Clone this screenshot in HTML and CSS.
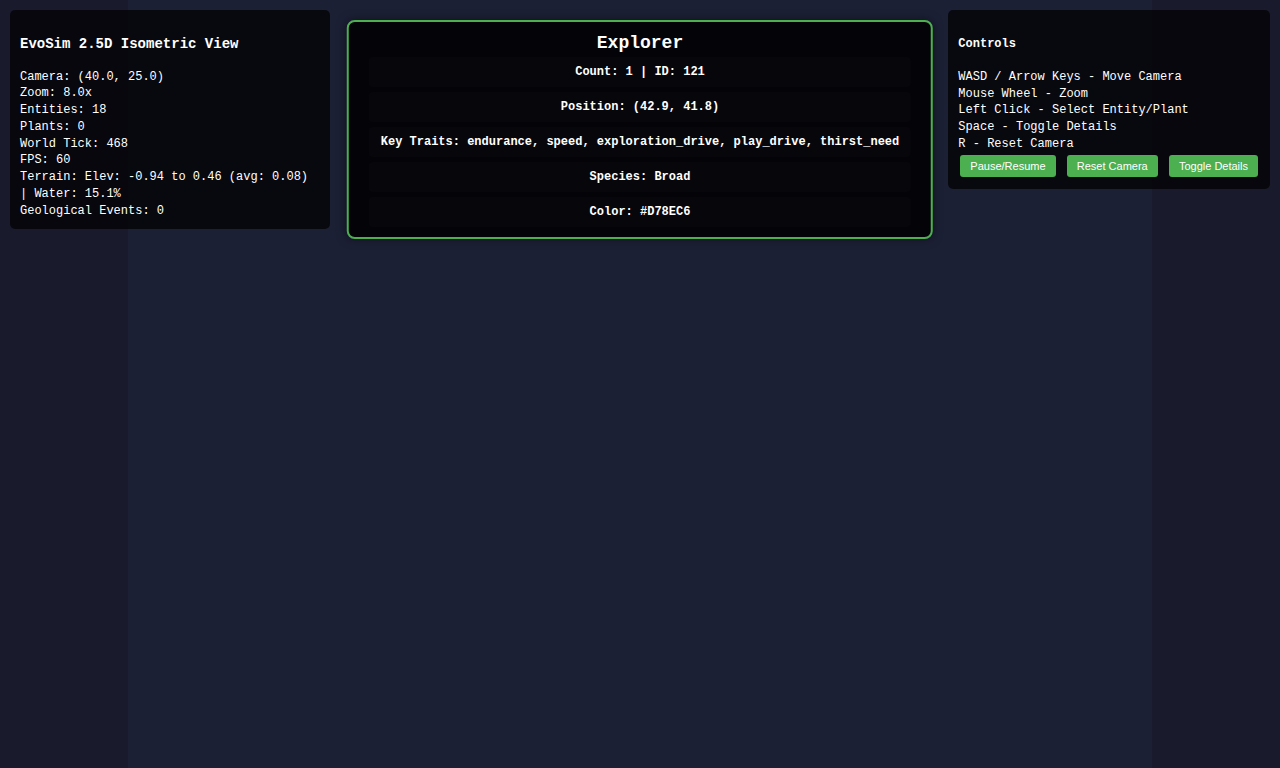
FILE: index.html
```html
<!DOCTYPE html>
<html>
<head>
<meta charset="utf-8">
<title>EvoSim 2.5D</title>
<link rel="stylesheet" href="styles.css">
</head>
<body>
<div class="stage">
  <div class="canvas"></div>
</div>

<div class="panel info">
  <h3 class="title">EvoSim 2.5D Isometric View</h3>
  <div class="lines">
    <div>Camera: (40.0, 25.0)</div>
    <div>Zoom: 8.0x</div>
    <div>Entities: 18</div>
    <div>Plants: 0</div>
    <div>World Tick: 468</div>
    <div>FPS: 60</div>
    <div>Terrain: Elev: -0.94 to 0.46 (avg: 0.08) | Water: 15.1%</div>
    <div>Geological Events: 0</div>
  </div>
</div>

<div class="explorer">
  <div class="explorer-title">Explorer</div>
  <div class="row">Count: 1 | ID: 121</div>
  <div class="row">Position: (42.9, 41.8)</div>
  <div class="row">Key Traits: endurance, speed, exploration_drive, play_drive, thirst_need</div>
  <div class="row">Species: Broad</div>
  <div class="row">Color: #D78EC6</div>
</div>

<div class="panel controls">
  <h4 class="subtitle">Controls</h4>
  <div class="lines">
    <div>WASD / Arrow Keys - Move Camera</div>
    <div>Mouse Wheel - Zoom</div>
    <div>Left Click - Select Entity/Plant</div>
    <div>Space - Toggle Details</div>
    <div>R - Reset Camera</div>
  </div>
  <div class="buttons"><button class="btn">Pause/Resume</button> <button class="btn">Reset Camera</button> <button class="btn">Toggle Details</button></div>
</div>
</body>
</html>
```

FILE: styles.css
```css
html, body {
  margin: 0;
  padding: 0;
  height: 100%;
  overflow: hidden;
}

body {
  background: #1a1a2d;
  font-family: "Liberation Mono", "Courier New", monospace;
  font-size: 12px;
  color: #ffffff;
}

.stage {
  display: flex;
  justify-content: center;
  height: 100%;
}

.canvas {
  width: 1024px;
  height: 768px;
  background: #1c2035;
}

.panel {
  position: absolute;
  top: 10px;
  background: rgba(0, 0, 0, 0.7);
  border-radius: 5px;
  line-height: 1.4;
}

.info {
  left: 10px;
  width: 300px;
  padding: 10px;
}

.controls {
  right: 10px;
  padding: 10px;
}

.title {
  font-size: 14px;
  font-weight: bold;
  margin: 15px 0 14px;
  line-height: 1.4;
}

.lines {
  line-height: 16.75px;
}

.subtitle {
  font-size: 12px;
  font-weight: bold;
  margin: 16px 0 16px;
  line-height: 1.4;
}

.buttons {
  margin-top: 0;
  line-height: 1;
}

.btn {
  display: inline-block;
  margin: 2px;
  padding: 4px 10px;
  background: #4caf50;
  color: #ffffff;
  border: none;
  border-radius: 3px;
  font-family: "Liberation Sans", Arial, sans-serif;
  font-size: 11px;
  line-height: 14px;
  vertical-align: top;
}

.explorer {
  position: absolute;
  top: 20px;
  left: 50%;
  transform: translateX(-50%);
  background: rgba(0, 0, 0, 0.85);
  border: 2px solid #4caf50;
  border-radius: 8px;
  padding: 11px 20px 10px;
  box-shadow: 0 0 10px rgba(0, 0, 0, 0.5);
  white-space: nowrap;
}

.explorer-title {
  font-size: 18px;
  font-weight: bold;
  text-align: center;
  line-height: 20px;
  margin-bottom: 4px;
}

.row {
  background: rgba(255, 255, 255, 0.015);
  border-radius: 4px;
  padding: 6px 12px;
  line-height: 18px;
  font-weight: bold;
  text-align: center;
  margin-bottom: 5px;
}

.row:last-child {
  margin-bottom: 0;
}
```
